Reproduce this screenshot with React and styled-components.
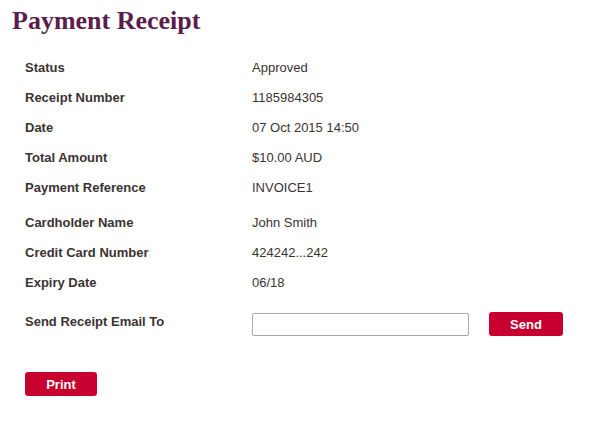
import React from "react";
import styled, { createGlobalStyle } from "styled-components";

const GlobalStyle = createGlobalStyle`
  body {
    margin: 0;
    background: #fff;
    font-family: "Liberation Sans", Arial, sans-serif;
  }
`;

const Page = styled.div`
  padding: 6px 12px 0;
`;

const Title = styled.h1`
  margin: 0 0 16px;
  font-family: "Liberation Serif", "Times New Roman", serif;
  font-size: 26px;
  font-weight: bold;
  color: #5b1e4c;
  line-height: 30px;
`;

const Details = styled.div`
  padding-left: 13px;
`;

const Group = styled.div`
  margin-bottom: ${(p) => p.$gap || 0}px;
`;

const Row = styled.div`
  display: grid;
  grid-template-columns: 227px 1fr;
  align-items: center;
  height: 30px;
  font-size: 13px;
`;

const Label = styled.span`
  font-weight: bold;
  color: #3a3333;
`;

const Value = styled.span`
  color: #3a3333;
`;

const EmailRow = styled.div`
  display: grid;
  grid-template-columns: 227px 217px auto;
  align-items: center;
  font-size: 13px;
  height: 30px;
`;

const EmailLabel = styled(Label)`
  margin-top: -5px;
`;

const EmailInput = styled.input`
  box-sizing: border-box;
  width: 217px;
  height: 23px;
  border: 1px solid #a9a9a9;
  border-radius: 2px;
  padding: 0 4px;
`;

const Button = styled.button`
  box-sizing: border-box;
  width: ${(p) => p.$width}px;
  height: 24px;
  margin-left: ${(p) => p.$offset || 0}px;
  border: none;
  border-radius: 3px;
  background: #c8002f;
  color: #fff;
  font-family: "Liberation Sans", Arial, sans-serif;
  font-size: 13px;
  font-weight: bold;
  cursor: pointer;
`;

const PrintWrap = styled.div`
  margin-top: 33px;
`;

const groups = [
  [
    ["Status", "Approved"],
    ["Receipt Number", "1185984305"],
    ["Date", "07 Oct 2015 14:50"],
    ["Total Amount", "$10.00 AUD"],
    ["Payment Reference", "INVOICE1"],
  ],
  [
    ["Cardholder Name", "John Smith"],
    ["Credit Card Number", "424242...242"],
    ["Expiry Date", "06/18"],
  ],
];

export default function App() {
  return (
    <Page>
      <GlobalStyle />
      <Title>Payment Receipt</Title>
      <Details>
        {groups.map((rows, i) => (
          <Group key={i} $gap={i === 0 ? 5 : 12}>
            {rows.map(([label, value]) => (
              <Row key={label}>
                <Label>{label}</Label>
                <Value>{value}</Value>
              </Row>
            ))}
          </Group>
        ))}
        <EmailRow>
          <EmailLabel>Send Receipt Email To</EmailLabel>
          <EmailInput type="text" />
          <Button $width={74} $offset={20}>Send</Button>
        </EmailRow>
        <PrintWrap>
          <Button $width={72}>Print</Button>
        </PrintWrap>
      </Details>
    </Page>
  );
}
